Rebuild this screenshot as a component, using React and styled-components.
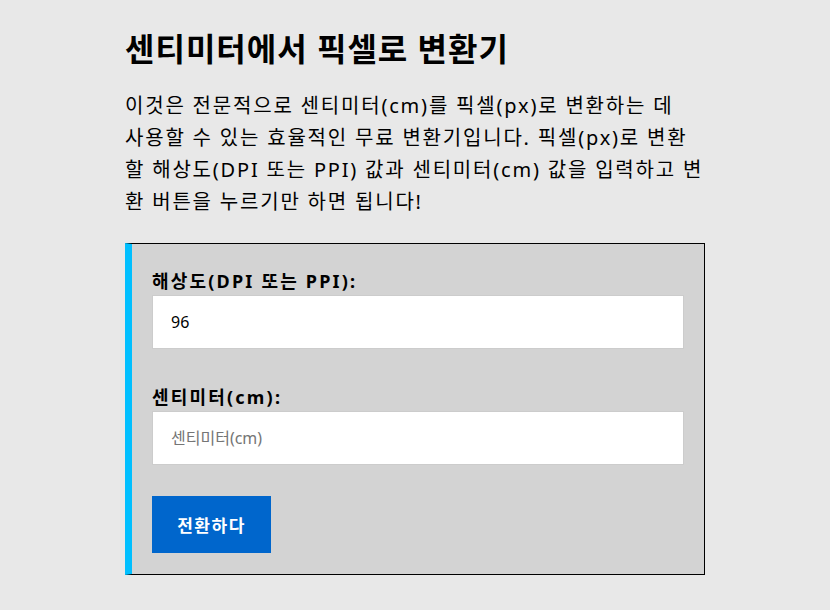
import React from "react";
import styled, { createGlobalStyle } from "styled-components";

const Global = createGlobalStyle`
  body {
    margin: 0;
    background: #e8e8e8;
    font-family: "Noto Sans", "Noto Sans CJK KR", sans-serif;
    color: #000;
  }
`;

const Page = styled.main`
  width: 580px;
  margin: 0 auto;
  padding-top: 26px;
`;

const Title = styled.h1`
  margin: 0 0 19px;
  font-size: 32px;
  line-height: 45px;
  font-weight: 700;
  letter-spacing: 1px;
`;

const Intro = styled.p`
  margin: 0 0 25px;
  font-size: 20px;
  line-height: 32px;
  letter-spacing: 1.8px;
`;

const Card = styled.form`
  background: #d3d3d3;
  border: 1px solid #000;
  border-left: 7px solid #00bfff;
  padding: 24px 20px 21px 20px;
`;

const Field = styled.div`
  margin-bottom: ${(p) => p.$gap}px;
`;

const Label = styled.label`
  display: block;
  font-size: 18px;
  line-height: 26px;
  font-weight: 700;
  letter-spacing: 2.2px;
  margin-bottom: 1px;
`;

const Input = styled.input`
  display: block;
  box-sizing: border-box;
  width: 100%;
  height: 54px;
  padding: 0 18px;
  border: 1px solid #ccc;
  background: #fff;
  font-family: inherit;
  font-size: 16px;
  color: #000;
  outline: none;
  &::placeholder {
    color: #757575;
  }
`;

const Button = styled.button`
  width: 119px;
  height: 57px;
  border: none;
  background: #0066cc;
  color: #fff;
  font-family: inherit;
  font-size: 17px;
  font-weight: 700;
  letter-spacing: 1.5px;
  cursor: pointer;
`;

export default function App() {
  return (
    <>
      <Global />
      <Page>
        <Title>센티미터에서 픽셀로 변환기</Title>
        <Intro>
          이것은 전문적으로 센티미터(cm)를 픽셀(px)로 변환하는 데
          <br />
          사용할 수 있는 효율적인 무료 변환기입니다. 픽셀(px)로 변환
          <br />
          할 해상도(DPI 또는 PPI) 값과 센티미터(cm) 값을 입력하고 변
          <br />
          환 버튼을 누르기만 하면 됩니다!
        </Intro>
        <Card onSubmit={(e) => e.preventDefault()}>
          <Field $gap={35}>
            <Label htmlFor="dpi">해상도(DPI 또는 PPI):</Label>
            <Input id="dpi" type="text" defaultValue="96" />
          </Field>
          <Field $gap={31}>
            <Label htmlFor="cm">센티미터(cm):</Label>
            <Input id="cm" type="text" placeholder="센티미터(cm)" />
          </Field>
          <Button type="submit">전환하다</Button>
        </Card>
      </Page>
    </>
  );
}
